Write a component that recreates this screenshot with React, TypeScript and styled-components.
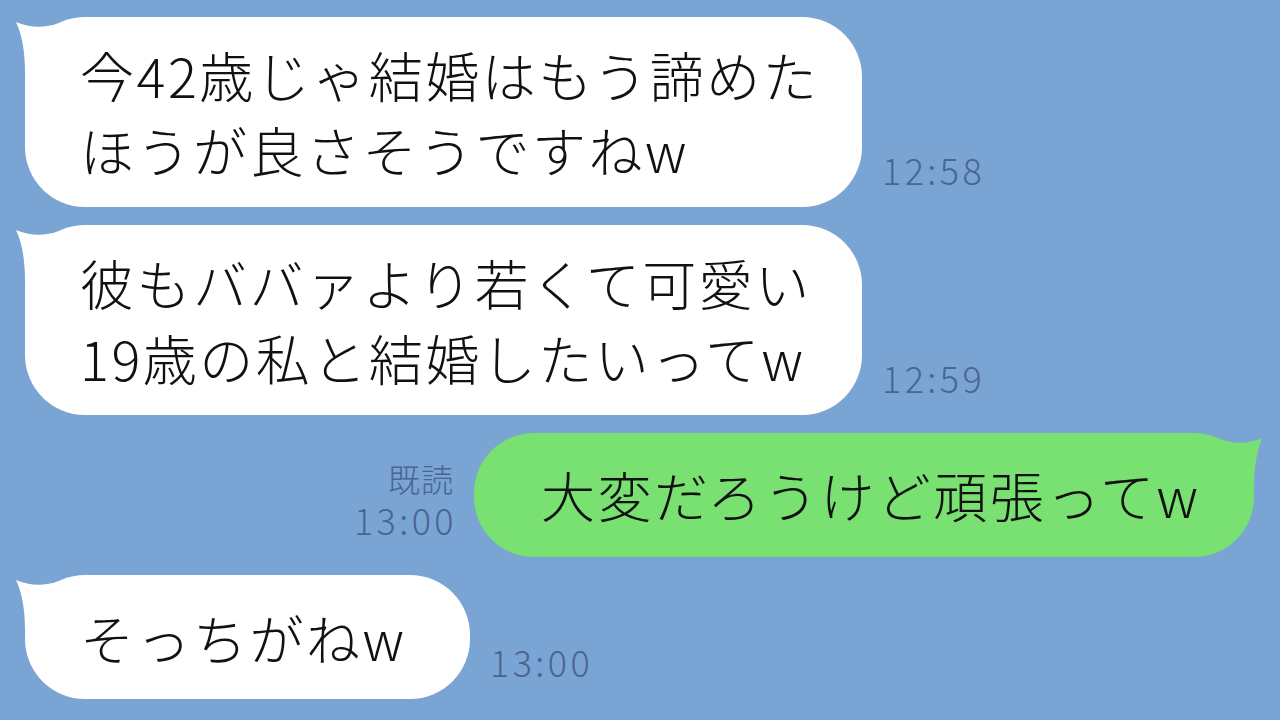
import React from "react";
import styled, { createGlobalStyle } from "styled-components";

const GlobalStyle = createGlobalStyle`
  html, body {
    margin: 0;
    padding: 0;
    background: #7aa4d4;
  }
  body {
    font-family: "Noto Sans CJK JP", "Noto Sans", sans-serif;
  }
`;

const Screen = styled.div`
  width: 1280px;
  height: 720px;
  overflow: hidden;
  background: #7aa4d4;
  box-sizing: border-box;
  padding: 17px 26px 0 25px;
  display: flex;
  flex-direction: column;
  gap: 18px;
`;

const Row = styled.div<{ $mine?: boolean }>`
  display: flex;
  align-items: flex-end;
  justify-content: ${(p) => (p.$mine ? "flex-end" : "flex-start")};
  gap: 20px;
`;

const Bubble = styled.div<{ $mine?: boolean; $width: number }>`
  position: relative;
  box-sizing: border-box;
  width: ${(p) => p.$width}px;
  min-height: 124px;
  display: flex;
  align-items: center;
  padding: ${(p) => (p.$mine ? "20px 0 22px 67px" : "20px 0 20px 55px")};
  border-radius: 60px;
  background: ${(p) => (p.$mine ? "#79e072" : "#ffffff")};
  color: #111;
  font-size: 54px;
  font-weight: 300;
  line-height: 75px;
  letter-spacing: 2.5px;
  white-space: nowrap;
`;

const Tail = styled.svg<{ $mine?: boolean }>`
  position: absolute;
  top: 0;
  width: 44px;
  height: 56px;
  overflow: visible;
  ${(p) => (p.$mine ? "right: 0;" : "left: 0;")}
`;

const Meta = styled.div`
  display: flex;
  flex-direction: column;
  align-items: flex-end;
  gap: 2px;
  padding-bottom: 18px;
  color: #4a6590;
  font-weight: 300;
`;

const Read = styled.span`
  font-size: 32px;
  line-height: 38px;
  letter-spacing: 1px;
`;

const Time = styled.span`
  font-size: 36px;
  line-height: 40px;
  letter-spacing: 3.4px;
  margin-right: -3px;
`;

const BubbleTail = ({ mine }: { mine?: boolean }) => (
  <Tail $mine={mine} viewBox="0 0 44 56">
    {mine ? (
      <path d="M52 5 Q32 14 10 6 L10 56 L44 56 Q44 24 52 5 Z" fill="#79e072" />
    ) : (
      <path d="M-9 5 Q12 14 34 6 L34 56 L0 56 Q0 24 -9 5 Z" fill="#ffffff" />
    )}
  </Tail>
);

interface MessageProps {
  lines: string[];
  time: string;
  width: number;
  mine?: boolean;
  read?: boolean;
}

const Message = ({ lines, time, width, mine, read }: MessageProps) => {
  const meta = (
    <Meta>
      {read ? <Read>既読</Read> : null}
      <Time>{time}</Time>
    </Meta>
  );
  return (
    <Row $mine={mine}>
      {mine ? meta : null}
      <Bubble $mine={mine} $width={width}>
        <BubbleTail mine={mine} />
        <span>
          {lines.map((l, i) => (
            <React.Fragment key={i}>
              {i > 0 ? <br /> : null}
              {l}
            </React.Fragment>
          ))}
        </span>
      </Bubble>
      {mine ? null : meta}
    </Row>
  );
};

const App = () => (
  <>
    <GlobalStyle />
    <Screen>
      <Message lines={["今42歳じゃ結婚はもう諦めた", "ほうが良さそうですねw"]} time="12:58" width={837} />
      <Message lines={["彼もババァより若くて可愛い", "19歳の私と結婚したいってw"]} time="12:59" width={837} />
      <Message lines={["大変だろうけど頑張ってw"]} time="13:00" width={780} mine read />
      <Message lines={["そっちがねw"]} time="13:00" width={445} />
    </Screen>
  </>
);

export default App;
